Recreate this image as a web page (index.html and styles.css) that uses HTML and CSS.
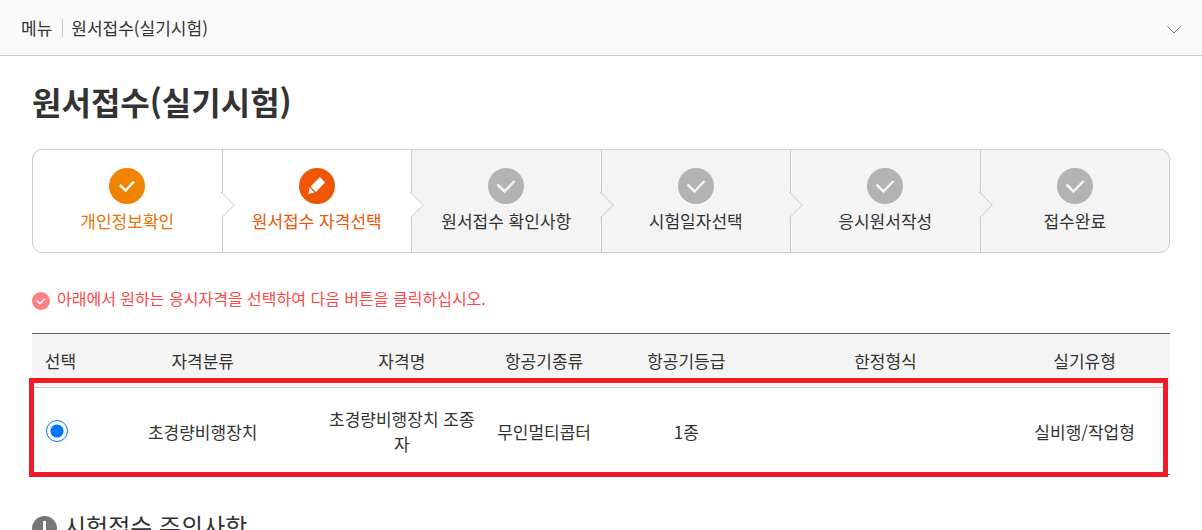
FILE: index.html
```
<!DOCTYPE html>
<html lang="ko">
	<head>
		<meta charset="UTF-8">
		<meta name="viewport" content="width=device-width, initial-scale=1.0">
		<title>원서접수(실기시험)</title>
		<link rel="stylesheet" href="styles.css">
	</head>
	<body>
		<!-- 상단 메뉴 -->
		<header class="location">
			<span class="location-label">메뉴</span>
			<span class="location-current">원서접수(실기시험)</span>
			<button class="location-toggle" type="button" aria-label="메뉴 열기">
				<svg width="14" height="8" viewBox="0 0 14 8"><path d="M.5.5L7 7l6.500-6.500" /></svg>
			</button>
		</header>

		<main class="content">
			<h1>원서접수(실기시험)</h1>

			<!-- 접수 단계 -->
			<ol class="steps">
				<li class="step done">
					<svg class="step-icon" viewBox="0 0 36 36"><circle cx="18" cy="18" r="18" /><path d="M11 17l5.500 5.500L25 13.500" /></svg>
					<span>개인정보확인</span>
				</li>
				<li class="step current">
					<svg class="step-icon" viewBox="0 0 36 36"><circle cx="18" cy="18" r="18" /><path class="pen" d="M21 9l5 5.500-9 9.500-5.500-5.500zM10.500 19.500l5 5-6 1.500z" /></svg>
					<span>원서접수 자격선택</span>
				</li>
				<li class="step">
					<svg class="step-icon" viewBox="0 0 36 36"><circle cx="18" cy="18" r="18" /><path d="M9.500 16.500l7 7L26.500 13" /></svg>
					<span>원서접수 확인사항</span>
				</li>
				<li class="step">
					<svg class="step-icon" viewBox="0 0 36 36"><circle cx="18" cy="18" r="18" /><path d="M9.500 16.500l7 7L26.500 13" /></svg>
					<span>시험일자선택</span>
				</li>
				<li class="step">
					<svg class="step-icon" viewBox="0 0 36 36"><circle cx="18" cy="18" r="18" /><path d="M9.500 16.500l7 7L26.500 13" /></svg>
					<span>응시원서작성</span>
				</li>
				<li class="step">
					<svg class="step-icon" viewBox="0 0 36 36"><circle cx="18" cy="18" r="18" /><path d="M9.500 16.500l7 7L26.500 13" /></svg>
					<span>접수완료</span>
				</li>
			</ol>

			<p class="notice">
				<svg width="18" height="18" viewBox="0 0 18 18"><circle cx="9" cy="9" r="9" /><path d="M5 8.500l3 3 5-5" /></svg>
				아래에서 원하는 응시자격을 선택하여 다음 버튼을 클릭하십시오.
			</p>

			<!-- 응시자격 목록 -->
			<div class="table-wrap">
				<table class="license-table">
					<colgroup>
						<col class="col-select">
						<col class="col-category">
						<col class="col-name">
						<col class="col-kind">
						<col class="col-grade">
						<col class="col-limit">
						<col class="col-type">
					</colgroup>
					<thead>
						<tr>
							<th>선택</th>
							<th>자격분류</th>
							<th>자격명</th>
							<th>항공기종류</th>
							<th>항공기등급</th>
							<th>한정형식</th>
							<th>실기유형</th>
						</tr>
					</thead>
					<tbody>
						<tr>
							<td class="select-cell"><input type="radio" name="license" id="license1" checked></td>
							<td><label for="license1">초경량비행장치</label></td>
							<td>초경량비행장치 조종자</td>
							<td>무인멀티콥터</td>
							<td>1종</td>
							<td></td>
							<td>실비행/작업형</td>
						</tr>
					</tbody>
				</table>
				<!-- 선택한 행 강조 테두리 -->
				<div class="highlight"></div>
			</div>

			<h2>
				<svg width="25" height="25" viewBox="0 0 25 25"><circle cx="12.500" cy="12.500" r="12.500" /><path d="M12.500 5v9M12.500 17v3" /></svg>
				시험접수 주의사항
			</h2>
		</main>
	</body>
</html>
```
FILE: styles.css
```
* {
	box-sizing: border-box;
}

html {
	overflow: hidden;
}

body {
	margin: 0;
	background: #fff;
	color: #333;
	font-family: "Noto Sans CJK KR", sans-serif;
	font-size: 17px;
	line-height: 24px;
}

/* 상단 메뉴 */
.location {
	display: flex;
	align-items: center;
	height: 56px;
	padding: 0 21px;
	background: #f9f9f9;
	border-bottom: 1px solid #ccc;
}

.location-label {
	display: flex;
	align-items: center;
}

/* 구분선 */
.location-label::after {
	content: "";
	width: 1px;
	height: 18px;
	margin: 0 8px 0 10px;
	background: #ccc;
}

.location-toggle {
	display: flex;
	margin-left: auto;
	padding: 4px 0 0;
	border: 0;
	background: none;
	cursor: pointer;
}

.location-toggle path {
	fill: none;
	stroke: #777;
}

.content {
	padding: 21px 32px 0;
}

h1 {
	margin: 0 0 24px;
	font-size: 32px;
	line-height: 48px;
}

/* 접수 단계 */
.steps {
	display: flex;
	margin: 0 0 33px;
	padding: 0;
	list-style: none;
	border: 1px solid #ccc;
	border-radius: 10px;
	background: #f4f4f4;
}

.step {
	position: relative;
	display: flex;
	flex: 1;
	flex-direction: column;
	align-items: center;
	gap: 5px;
	padding: 18px 0 19px;
	background: #f4f4f4;
}

.step:last-child {
	border-radius: 0 10px 10px 0;
}

.step + .step {
	border-left: 1px solid #ccc;
}

/* 다음 단계 화살표 */
.step:not(:last-child)::after {
	content: "";
	position: absolute;
	z-index: 1;
	top: 45px;
	right: -9px;
	width: 19px;
	height: 19px;
	border: 1px solid #ccc;
	border-width: 1px 1px 0 0;
	background: inherit;
	transform: rotate(45deg);
	clip-path: polygon(0 0, 100% 0, 100% 100%);
}

.step.done,
.step.current {
	background: #fff;
}

.step.done {
	border-radius: 10px 0 0 10px;
	color: #e97400;
}

.step.current {
	color: #ee5505;
}

.step-icon {
	width: 36px;
	height: 36px;
	fill: #b3b3b3;
}

.done .step-icon {
	fill: #f08300;
}

.current .step-icon {
	fill: #ee5505;
}

.step-icon path {
	fill: none;
	stroke: #f4f4f4;
	stroke-width: 2.5;
}

.done .step-icon path {
	stroke: #fff;
}

.step-icon path.pen {
	fill: #fff;
	stroke: none;
}

/* 안내 문구 */
.notice {
	display: flex;
	align-items: flex-end;
	gap: 7px;
	margin: 0 0 23px;
	color: #ff4747;
	font-size: 16px;
}

.notice circle {
	fill: #ff8080;
}

.notice path {
	fill: none;
	stroke: #fff;
	stroke-width: 1.5;
}

/* 응시자격 목록 */
.table-wrap {
	position: relative;
}

.license-table {
	width: 100%;
	table-layout: fixed;
	border-collapse: collapse;
	border-top: 1px solid #666;
	border-bottom: 1px solid #666;
	text-align: center;
}

.license-table th {
	padding: 15px 4px 14px;
	background: #f4f4f4;
	border-bottom: 1px solid #ccc;
	font-weight: normal;
}

.license-table td {
	padding: 18px 8px;
	line-height: 25px;
	word-break: break-all;
}

.license-table .select-cell {
	padding: 0 4px 0 14px;
	text-align: left;
}

.col-select {
	width: 5%;
}

.col-category {
	width: 20%;
}

.col-name {
	width: 15%;
}

.col-kind {
	width: 10%;
}

.col-grade {
	width: 15%;
}

.col-limit {
	width: 20%;
}

.col-type {
	width: 15%;
}

.license-table input {
	display: block;
	width: 22px;
	height: 22px;
	margin: 0;
	accent-color: #0075ff;
}

.highlight {
	position: absolute;
	top: 45px;
	right: 2px;
	bottom: -2px;
	left: -3px;
	border: 5px solid #ee1c25;
	pointer-events: none;
}

h2 {
	display: flex;
	align-items: flex-end;
	gap: 7px;
	margin: 35px 0 0;
	font-size: 24px;
	font-weight: normal;
	line-height: 31px;
}

h2 circle {
	fill: #777;
}

h2 path {
	stroke: #fff;
	stroke-width: 3;
}
```
